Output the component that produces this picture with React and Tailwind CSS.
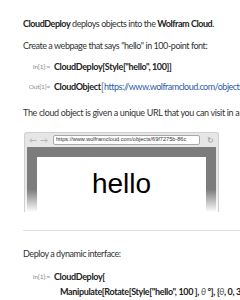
import React from 'react';

const Label = ({ children }) => (
  <span className="w-[54px] shrink-0 text-right pr-[4px] text-[6.5px] text-[#8a8a8a] tracking-[-0.2px]">{children}</span>
);

const App = () => {
  return (
    <div className="w-[240px] h-[300px] overflow-hidden bg-white text-[#333] font-['Lato',sans-serif]">
      <div className="pl-[23px] pt-[18px] text-[9px] leading-[12px] whitespace-nowrap">
        <p className="tracking-[-0.45px]">
          <b className="text-[#222]">CloudDeploy</b> deploys objects into the <b className="text-[#222]">Wolfram Cloud</b>.
        </p>
        <p className="mt-[10px] tracking-[-0.45px]">Create a webpage that says "hello" in 100-point font:</p>

        <div className="mt-[9px] -ml-[23px] flex items-center tracking-[-0.35px]">
          <Label>In[1]:=</Label>
          <b className="text-[#222]">CloudDeploy[Style["hello", 100]]</b>
        </div>
        <div className="mt-[8px] -ml-[23px] flex items-center tracking-[-0.35px]">
          <Label>Out[1]=</Label>
          <b className="text-[#222]">CloudObject</b>
          <span className="text-[#888] text-[12px] leading-[12px]">[</span>
          <span className="text-[#2d5ca8] tracking-[-0.5px]">https://www.wolframcloud.com/objects/69f7275b</span>
        </div>

        <p className="mt-[14px] tracking-[-0.35px]">The cloud object is given a unique URL that you can visit in a web browser:</p>
      </div>

      <div className="ml-[24px] mt-[13px] w-[195px] h-[80px] bg-gradient-to-b from-[#e6e6e6] from-70% to-white rounded-t-[3px] border-t border-x border-[#cfcfcf] flex flex-col">
        <div className="h-[14px] flex items-center px-[4px] gap-[3px]">
          <span className="text-[8px] text-[#aaa] leading-none">←</span>
          <span className="text-[8px] text-[#aaa] leading-none">→</span>
          <div className="ml-[2px] w-[152px] h-[10px] bg-white border border-[#a8a8a8] rounded-[2px] overflow-hidden flex items-center px-[2px]">
            <span className="text-[5.6px] text-[#333] leading-none font-['Liberation_Sans',sans-serif] whitespace-nowrap">https://www.wolframcloud.com/objects/69f7275b-86c</span>
          </div>
          <span className="ml-[4px] text-[8px] text-[#999] leading-none">↻</span>
        </div>
        <div className="flex-1 mx-[2px] bg-gradient-to-b from-[#7c7c7c] from-65% to-white pt-[10px] px-[10px] flex">
          <div className="flex-1 bg-white flex justify-center pt-[13px]">
            <span className="font-['Liberation_Sans',sans-serif] text-[28px] leading-[28px] text-black">hello</span>
          </div>
        </div>
      </div>

      <div className="ml-[23px] mt-[18px] h-px bg-[#dcdcdc]"></div>

      <div className="pl-[23px] text-[9px] leading-[12px] whitespace-nowrap">
        <p className="mt-[17px] tracking-[-0.45px]">Deploy a dynamic interface:</p>
        <div className="mt-[11px] -ml-[23px] flex items-center tracking-[-0.35px]">
          <Label>In[1]:=</Label>
          <b className="text-[#222]">CloudDeploy[</b>
        </div>
        <div className="mt-[3px] pl-[37px] tracking-[-0.35px]">
          <b className="text-[#222]">
            Manipulate[Rotate[Style["hello", 100 ], <i className="font-normal text-[#555]">θ</i> °], {'{'}<i className="font-normal text-[#555]">θ</i>, 0, 360 °{'}'}]]
          </b>
        </div>
      </div>
    </div>
  );
};

export default App;
